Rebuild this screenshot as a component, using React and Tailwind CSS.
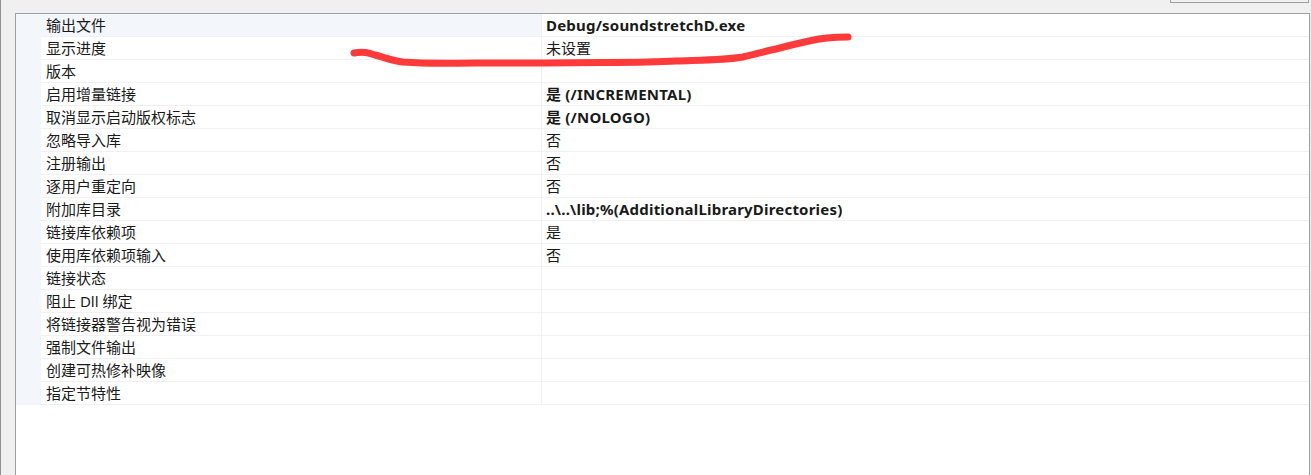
import React from 'react';

const rows = [
  { name: '输出文件', value: 'Debug/soundstretchD.exe', bold: true, selected: true },
  { name: '显示进度', value: '未设置' },
  { name: '版本', value: '' },
  { name: '启用增量链接', value: '是 (/INCREMENTAL)', bold: true },
  { name: '取消显示启动版权标志', value: '是 (/NOLOGO)', bold: true },
  { name: '忽略导入库', value: '否' },
  { name: '注册输出', value: '否' },
  { name: '逐用户重定向', value: '否' },
  { name: '附加库目录', value: '..\\..\\lib;%(AdditionalLibraryDirectories)', bold: true },
  { name: '链接库依赖项', value: '是' },
  { name: '使用库依赖项输入', value: '否' },
  { name: '链接状态', value: '' },
  { name: '阻止 Dll 绑定', value: '' },
  { name: '将链接器警告视为错误', value: '' },
  { name: '强制文件输出', value: '' },
  { name: '创建可热修补映像', value: '' },
  { name: '指定节特性', value: '' },
];

function Row({ name, value, bold, selected }) {
  return (
    <div className="flex h-[23px] border-b border-[#f0f0f5]">
      <div className={`w-[501px] shrink-0 pl-[5px] pt-[1px] flex items-center border-r border-[#f0f0f5] ${selected ? 'bg-[#f3f6fb]' : 'bg-white'}`}>
        {name}
      </div>
      <div className={`flex-1 pl-[4px] pt-[1px] flex items-center ${bold ? 'font-bold tracking-[0.2px]' : ''}`}>
        {value}
      </div>
    </div>
  );
}

export default function App() {
  return (
    <div
      className="relative w-[1311px] h-[475px] bg-[#f0f0f0] border-l border-[#8e9196] overflow-hidden text-[15px] text-[#1a1a1a]"
      style={{ fontFamily: '"Noto Sans", "Noto Sans CJK SC", sans-serif' }}
    >
      {/* top strip with the box edge at the right */}
      <div className="h-[13px] flex justify-end pr-[2px]">
        <div className="w-[139px] h-[3px] border-x border-b border-[#a0a0a0] bg-[#f0f0f0]" />
      </div>

      {/* property grid panel */}
      <div className="ml-[14px] mr-[1px] h-[462px] bg-white border-t border-x border-[#a0a0a0] flex flex-col">
        <div className="flex">
          <div className="w-[25px] shrink-0 bg-[#f3f6fb]" />
          <div className="flex-1 flex flex-col leading-none">
            {rows.map((r) => (
              <Row key={r.name} {...r} />
            ))}
          </div>
        </div>
      </div>

      {/* red pen scribble over the grid */}
      <svg className="absolute left-0 top-0 pointer-events-none" width="1311" height="475">
        <path
          d="M353 53 C 362 51, 368 53, 374 55 C 385 58, 392 61, 402 62 C 430 64, 450 63, 475 63 C 500 63, 520 63, 545 63 C 600 62, 640 63, 675 61 C 705 60, 725 60, 742 57 C 755 54, 765 51, 775 49 C 790 45, 798 43, 808 41 C 820 38, 832 37, 847 37"
          fill="none"
          stroke="#ff3a3a"
          strokeWidth="7"
          strokeLinecap="round"
          strokeLinejoin="round"
        />
      </svg>
    </div>
  );
}
